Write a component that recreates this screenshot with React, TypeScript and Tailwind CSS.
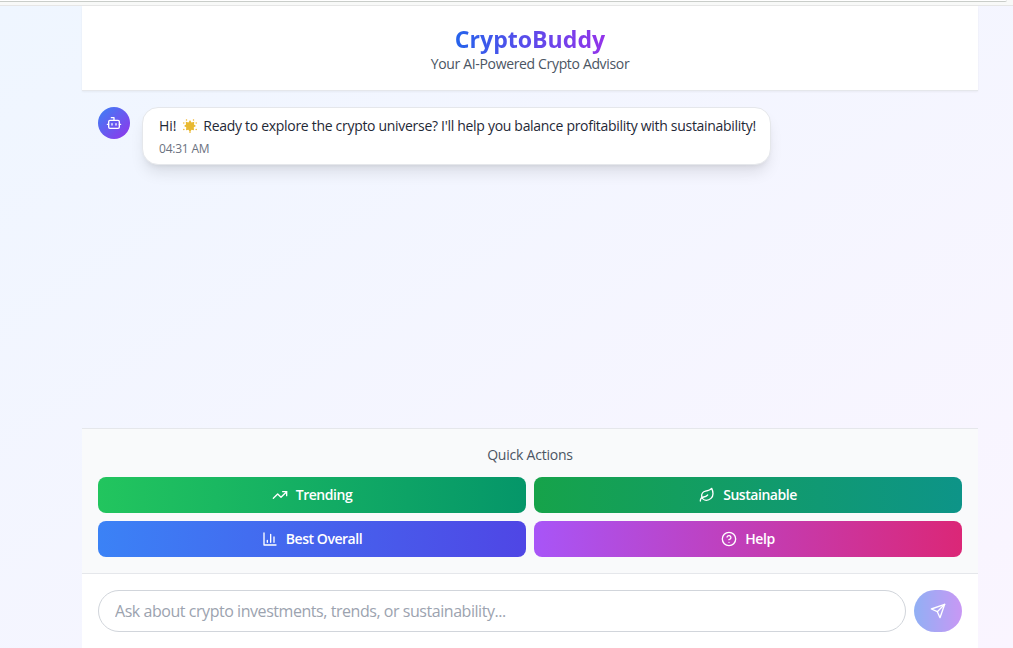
import React from "react";

const iconProps = {
  viewBox: "0 0 24 24",
  fill: "none",
  stroke: "currentColor",
  strokeWidth: 2,
  strokeLinecap: "round" as const,
  strokeLinejoin: "round" as const,
};

function BotIcon() {
  return (
    <svg {...iconProps} className="size-4">
      <path d="M12 8V4H8" />
      <rect width="16" height="12" x="4" y="8" rx="2" />
      <path d="M2 14h2M20 14h2M15 13v2M9 13v2" />
    </svg>
  );
}

function TrendingIcon() {
  return (
    <svg {...iconProps} className="size-4">
      <polyline points="22 7 13.5 15.5 8.5 10.5 2 17" />
      <polyline points="16 7 22 7 22 13" />
    </svg>
  );
}

function LeafIcon() {
  return (
    <svg {...iconProps} className="size-4">
      <path d="M11 20A7 7 0 0 1 9.8 6.1C15.5 5 17 4.48 19 2c1 2 2 4.18 2 8 0 5.5-4.78 10-10 10Z" />
      <path d="M2 21c0-3 1.85-5.36 5.08-6C9.5 14.52 12 13 13 12" />
    </svg>
  );
}

function ChartIcon() {
  return (
    <svg {...iconProps} className="size-4">
      <path d="M3 3v18h18M18 17V9M13 17V5M8 17v-3" />
    </svg>
  );
}

function HelpIcon() {
  return (
    <svg {...iconProps} className="size-4">
      <circle cx="12" cy="12" r="10" />
      <path d="M9.09 9a3 3 0 0 1 5.83 1c0 2-3 3-3 3M12 17h.01" />
    </svg>
  );
}

function SendIcon() {
  return (
    <svg {...iconProps} className="size-4">
      <path d="m22 2-7 20-4-9-9-4Z" />
      <path d="M22 2 11 13" />
    </svg>
  );
}

function StarIcon() {
  return (
    <svg viewBox="0 0 28 28" className="mr-[3px] ml-[2.5px] inline-block size-[14px] align-[-2px]">
      <path
        fill="#e8b931"
        d="m14 2 3 5 5.5-1.500-.5 5.500 4 3-4.500 2.500.5 6-5-1-3 5-3-5-5 1 .5-6L2 14l4-3-.5-5.500L11 7z"
      />
      <g fill="#efb52c">
        <circle cx="7" cy="1.8" r="1.5" />
        <circle cx="21" cy="1.8" r="1.5" />
        <circle cx="1.6" cy="8" r="1.5" />
        <circle cx="26.4" cy="8" r="1.5" />
        <circle cx="1.6" cy="21" r="1.5" />
        <circle cx="26.4" cy="21" r="1.5" />
        <circle cx="14" cy="26.4" r="1.5" />
      </g>
    </svg>
  );
}

const actions = [
  { label: "Trending", icon: <TrendingIcon />, style: "from-[#22c55e] to-[#059669]" },
  { label: "Sustainable", icon: <LeafIcon />, style: "from-[#16a34a] to-[#0d9488]" },
  { label: "Best Overall", icon: <ChartIcon />, style: "from-[#3b82f6] to-[#4f46e5]" },
  { label: "Help", icon: <HelpIcon />, style: "from-[#a855f7] to-[#db2777]" },
];

export default function App() {
  return (
    <div className="flex h-screen flex-col overflow-hidden font-['Open_Sans','Noto_Sans',sans-serif]">
      <div className="h-[6px] shrink-0 border-b border-[#e6e6e6] bg-[#f8f9f8]">
        <div className="mr-[6px] h-[2px] rounded-br-[4px] border-b border-[#c9cdc9] bg-white" />
      </div>
      <div className="flex min-h-0 flex-1 bg-linear-to-br/srgb from-[#eff6ff] to-[#faf5ff] pr-[35px] pl-[82px]">
        <main className="flex min-w-0 flex-1 flex-col">
          <header className="border-b border-[#e5e7eb] bg-white px-4 pt-[17px] pb-4 text-center shadow-[0_1px_2px_rgba(0,0,0,0.05)]">
            <h1 className="-mb-px text-[23.1px] leading-8 font-bold">
              <span className="bg-linear-to-r/srgb from-[#2563eb] to-[#9333ea] bg-clip-text text-transparent">
                CryptoBuddy
              </span>
            </h1>
            <p className="text-sm tracking-[-0.34px] text-[#4b5563]">Your AI-Powered Crypto Advisor</p>
          </header>

          <section className="flex flex-1 items-start gap-3 p-4">
            <div className="flex size-8 shrink-0 items-center justify-center rounded-full bg-linear-to-br/srgb from-[#3b82f6] to-[#9333ea] text-white">
              <BotIcon />
            </div>
            <div className="w-[629px] rounded-2xl border border-[#e5e7eb] bg-white px-4 py-2 whitespace-nowrap shadow-lg">
              <p className="text-sm text-[#1f2937]">
                Hi! <StarIcon /> <span className="tracking-[-0.3px]">Ready to explore the crypto universe? I'll help you balance profitability with sustainability!</span>
              </p>
              <p className="mt-[5px] -mb-px text-xs tracking-[-0.22px] text-[#6b7280]">04:31 AM</p>
            </div>
          </section>

          <section className="border-t border-[#e5e7eb] bg-[#f9fafb] p-4">
            <p className="mb-3 text-center text-sm tracking-[-0.22px] text-[#4b5563]">Quick Actions</p>
            <div className="grid grid-cols-2 gap-2">
              {actions.map((a) => (
                <button
                  key={a.label}
                  className={`flex h-9 items-center justify-center gap-2 rounded-lg bg-linear-to-r/srgb text-sm font-semibold text-white ${a.style}`}
                >
                  {a.icon}
                  <span className="tracking-[-0.45px]">{a.label}</span>
                </button>
              ))}
            </div>
          </section>

          <form className="flex gap-2 border-t border-[#e5e7eb] bg-white p-4">
            <input
              className="h-[42px] min-w-0 flex-1 rounded-full border border-[#d1d5db] bg-white px-4 text-base tracking-[-0.45px] placeholder:text-[#9ca3af]"
              placeholder="Ask about crypto investments, trends, or sustainability..."
            />
            <button
              type="button"
              aria-label="Send"
              className="flex h-[42px] w-12 items-center justify-center rounded-full bg-linear-to-r/srgb from-[#2563eb] to-[#9333ea] text-white opacity-50"
            >
              <SendIcon />
            </button>
          </form>
        </main>
      </div>
    </div>
  );
}
